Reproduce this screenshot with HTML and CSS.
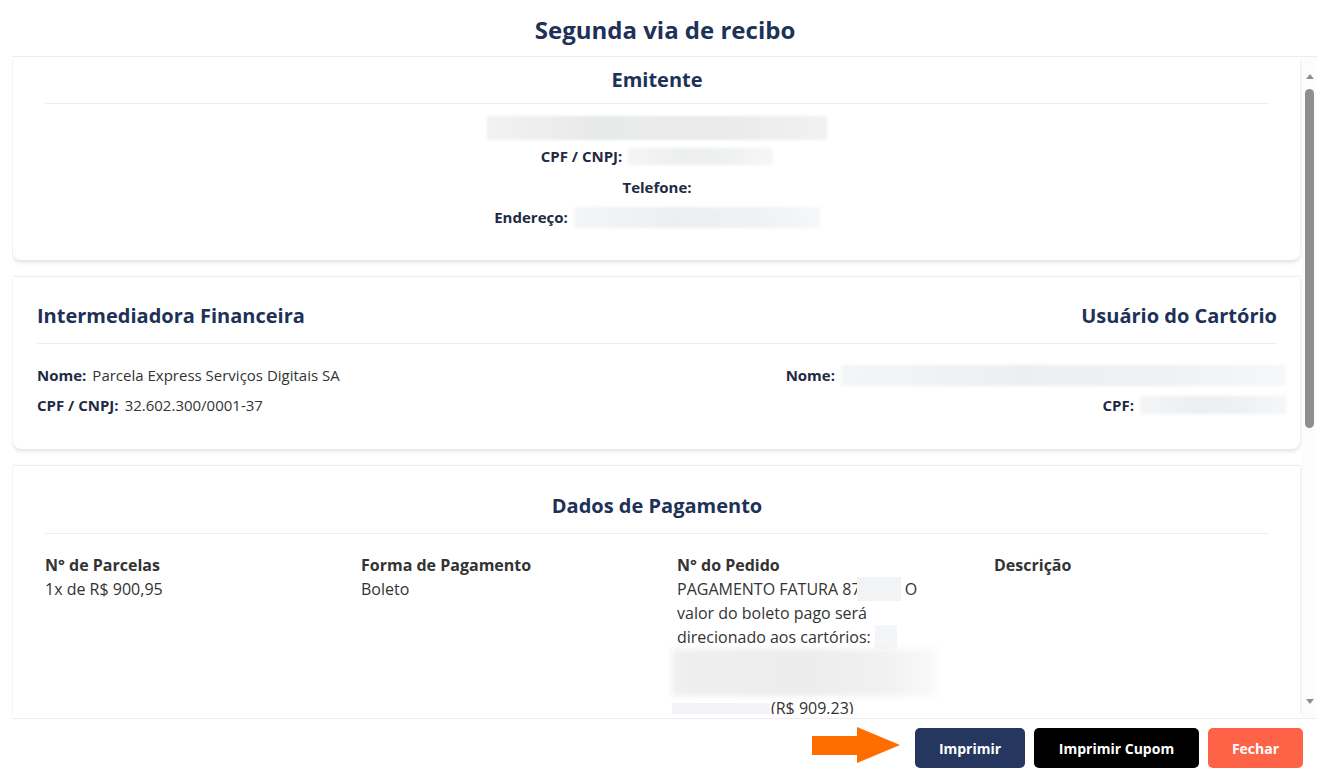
FILE: index.html
```html
<!DOCTYPE html>
<html lang="pt-BR">
<head>
<meta charset="utf-8">
<title>Segunda via de recibo</title>
<link rel="stylesheet" href="styles.css">
</head>
<body>
<div class="modal">
  <header class="modal-header">
    <h1 class="modal-title">Segunda via de recibo</h1>
  </header>
  <div class="modal-body">
    <div class="scroll-content">
      <section class="card card-emitente">
        <h2 class="card-title center">Emitente</h2>
        <div class="emitente-info">
          <div class="blur blur-name"></div>
          <div class="info-row"><span class="label">CPF / CNPJ:</span><span class="blur blur-cpf"></span></div>
          <div class="info-row"><span class="label">Telefone:</span></div>
          <div class="info-row"><span class="label">Endereço:</span><span class="blur blur-end"></span></div>
        </div>
      </section>

      <section class="card card-parties">
        <div class="parties-head">
          <h2 class="card-title">Intermediadora Financeira</h2>
          <h2 class="card-title">Usuário do Cartório</h2>
        </div>
        <div class="parties-body">
          <div class="party-left">
            <div class="party-row"><span class="label">Nome:</span><span class="value">Parcela Express Serviços Digitais SA</span></div>
            <div class="party-row"><span class="label">CPF / CNPJ:</span><span class="value">32.602.300/0001-37</span></div>
          </div>
          <div class="party-right">
            <div class="party-row"><span class="label">Nome:</span><span class="blur blur-uname"></span></div>
            <div class="party-row"><span class="label">CPF:</span><span class="blur blur-ucpf"></span></div>
          </div>
        </div>
      </section>

      <section class="card card-payment">
        <h2 class="card-title center">Dados de Pagamento</h2>
        <div class="pay-grid">
          <div class="pay-col">
            <div class="pay-head">N° de Parcelas</div>
            <div class="pay-value">1x de R$ 900,95</div>
          </div>
          <div class="pay-col">
            <div class="pay-head">Forma de Pagamento</div>
            <div class="pay-value">Boleto</div>
          </div>
          <div class="pay-col">
            <div class="pay-head">N° do Pedido</div>
            <div class="pay-value pedido">PAGAMENTO FATURA 87<span class="blur blur-inline1"></span> O<br>valor do boleto pago será<br>direcionado aos cartórios: <span class="blur blur-inline2"></span><br><span class="blur blur-block"></span><span class="blur blur-inline3"></span>(R$ 909,23)</div>
          </div>
          <div class="pay-col">
            <div class="pay-head">Descrição</div>
          </div>
        </div>
      </section>
    </div>
    <div class="scrollbar">
      <span class="sb-arrow up"></span>
      <span class="sb-track"><span class="sb-thumb"></span></span>
      <span class="sb-arrow down"></span>
    </div>
  </div>
  <footer class="modal-footer">
    <svg class="arrow" width="89" height="37" viewBox="0 0 89 37" aria-hidden="true">
      <polygon points="0,9 45,9 45,0 88,18 45,36 45,28 0,28" fill="#ff6d00"/>
    </svg>
    <button class="btn btn-primary">Imprimir</button>
    <button class="btn btn-dark">Imprimir Cupom</button>
    <button class="btn btn-close">Fechar</button>
  </footer>
</div>
</body>
</html>
```

FILE: styles.css
```css
* { box-sizing: border-box; }
html, body { margin: 0; padding: 0; background: #fff; }
body {
  font-family: "Open Sans", "Noto Sans", "Liberation Sans", sans-serif;
  color: #333;
}
.modal {
  width: 1330px;
  height: 781px;
  display: flex;
  flex-direction: column;
}
.modal-header {
  margin: 0 12px 0 12px;
  height: 57px;
  border-bottom: 1px solid #eceef3;
  display: flex;
  align-items: center;
  justify-content: center;
}
.modal-title {
  margin: 0;
  padding-top: 2px;
  font-size: 24px;
  font-weight: 700;
  color: #203158;
}
.modal-body {
  height: 662px;
  margin: 0 14px 0 12px;
  display: flex;
  border-bottom: 1px solid #eceef3;
}
.scroll-content {
  flex: 1;
  overflow: hidden;
  padding: 0 2px 0 1px;
  margin-bottom: 4px;
}
.card {
  background: #fff;
  border-top: 1px solid #eceef3;
  border-radius: 0 0 8px 8px;
  box-shadow: 0 2px 4px rgba(0, 0, 0, 0.13);
  margin-bottom: 16px;
}
.card-emitente { border-top: none; height: 203px; padding: 10px 31px 0 32px; }
.card-title {
  margin: 0;
  font-size: 20px;
  font-weight: 700;
  color: #203158;
  line-height: 26px;
}
.card-title.center {
  text-align: center;
  border-bottom: 1px solid #eceef3;
  padding-bottom: 10px;
}
.emitente-info {
  display: flex;
  flex-direction: column;
  align-items: center;
  padding-top: 12px;
}
.label {
  font-weight: 700;
  font-size: 15px;
  color: #1f2a44;
}
.value { font-size: 15px; color: #333; }
.info-row {
  display: flex;
  align-items: center;
  gap: 6px;
  height: 30.5px;
}
.blur-name + .info-row { margin-top: 1px; }
.blur {
  display: inline-block;
  background: linear-gradient(90deg, #f4f5f6 0%, #eceef0 40%, #eef0f1 70%, #f6f7f8 100%);
  filter: blur(1.5px);
  vertical-align: middle;
}
.blur-name { width: 340px; height: 24px; background: linear-gradient(90deg, #f1f2f3 0%, #e8e9eb 30%, #e9eaec 70%, #f0f1f2 100%); }
.blur-cpf { width: 145px; height: 17px; }
.blur-end { width: 246px; height: 21px; }

.card-parties { height: 173px; padding: 26px 14px 0 24px; }
.parties-head {
  display: flex;
  justify-content: space-between;
  border-bottom: 1px solid #eceef3;
  padding-bottom: 14px;
  margin-right: 9px;
}
.parties-body {
  display: flex;
  justify-content: space-between;
  padding-top: 16px;
}
.party-row {
  display: flex;
  align-items: center;
  gap: 6px;
  height: 30px;
}
.party-right .party-row { justify-content: flex-end; }
.blur-uname { width: 445px; height: 21px; }
.blur-ucpf { width: 146px; height: 18px; }

.card-payment { padding: 27px 31px 0 32px; min-height: 400px; }
.card-payment .card-title { padding-bottom: 14px; }
.pay-grid {
  display: grid;
  grid-template-columns: 316px 316px 317px 1fr;
  padding-top: 19px;
}
.pay-head {
  font-size: 16px;
  font-weight: 700;
  color: #333;
  line-height: 24px;
}
.pay-value {
  font-size: 16px;
  line-height: 24px;
  color: #333;
}
.blur-inline1 { width: 44px; height: 24px; margin-left: -4px; vertical-align: top; background: #f2f3f4; filter: blur(0.5px); }
.blur-inline2 { width: 22px; height: 24px; vertical-align: top; background: #f4f5f6; filter: blur(0.5px); }
.blur-block {
  display: block;
  width: 265px;
  height: 47px;
  margin-left: -5px;
  background: linear-gradient(90deg, #efefef 0%, #ececec 50%, #f1f1f1 80%, #fafafa 100%);
  filter: blur(3px);
}
.blur-inline3 { width: 98px; height: 14px; background: #f3f4f5; filter: blur(0.5px); margin-left: -5px; margin-right: 1px; }

.scrollbar {
  width: 14px;
  display: flex;
  flex-direction: column;
  align-items: center;
  padding: 12px 0 0 1px;
  background: #fcfcfc;
}
.sb-arrow {
  width: 0; height: 0;
  border-left: 4px solid transparent;
  border-right: 4px solid transparent;
}
.sb-arrow.up { border-bottom: 5px solid #8f8f8f; margin-top: 5px; }
.sb-arrow.down { border-top: 5px solid #8f8f8f; margin-bottom: 14px; }
.sb-track { flex: 1; width: 100%; display: flex; justify-content: center; padding-top: 10px; }
.sb-thumb { width: 9px; height: 339px; border-radius: 5px; background: #8f8f8f; }

.modal-footer {
  flex: 1;
  display: flex;
  justify-content: flex-end;
  align-items: flex-start;
  gap: 9px;
  padding: 9px 27px 0 0;
}
.arrow { margin-right: 5px; margin-top: -1px; }
.btn {
  height: 40px;
  border: none;
  border-radius: 5px;
  font-family: inherit;
  font-size: 14px;
  font-weight: 700;
  color: #fff;
  cursor: pointer;
}
.btn-primary { width: 110px; background: #25375f; }
.btn-dark { width: 165px; background: #000; }
.btn-close { width: 95px; background: #ff6347; }
```
